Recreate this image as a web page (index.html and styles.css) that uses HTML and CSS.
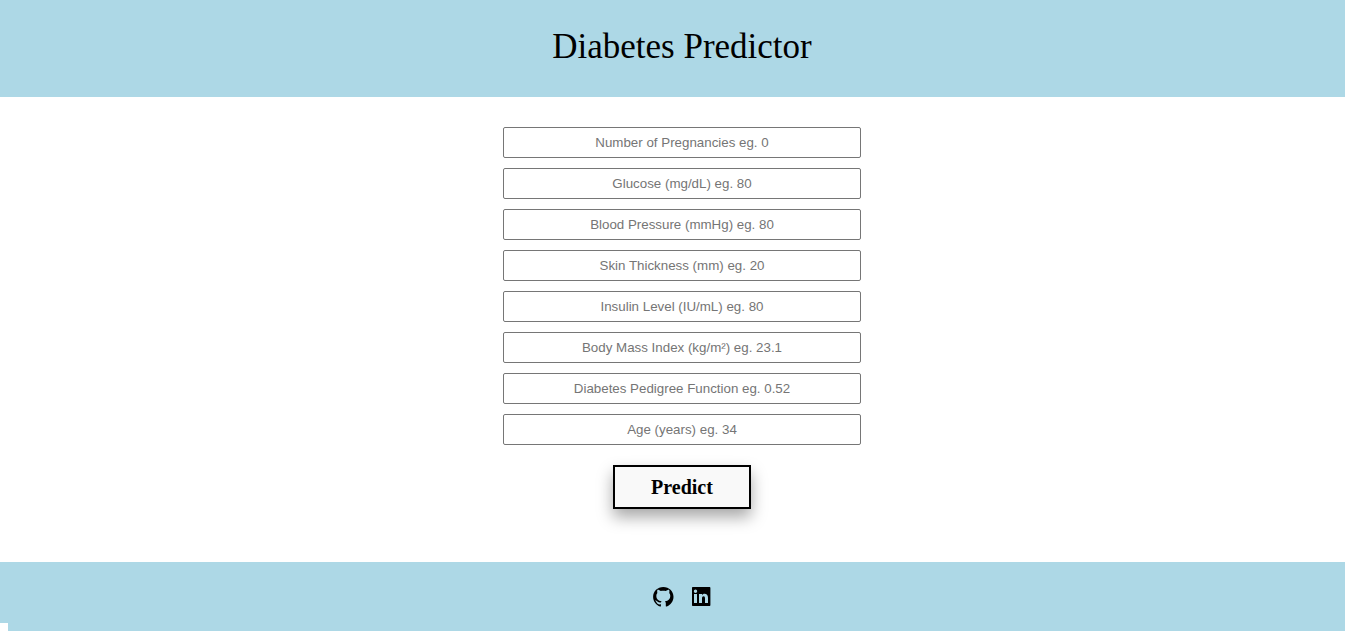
FILE: index.html
```html
<!DOCTYPE html>
<html lang="en">
<head>
<meta charset="utf-8">
<meta name="viewport" content="width=device-width, initial-scale=1">
<title>Diabetes Predictor</title>
<link rel="stylesheet" href="styles.css">
</head>
<body>
<header class="banner">
  <h1 class="title">Diabetes Predictor</h1>
</header>
<main class="content">
  <form class="form">
    <input class="field" type="text" name="pregnancies" aria-label="Number of Pregnancies" placeholder="Number of Pregnancies eg. 0">
    <input class="field" type="text" name="glucose" aria-label="Glucose" placeholder="Glucose (mg/dL) eg. 80">
    <input class="field" type="text" name="bloodpressure" aria-label="Blood Pressure" placeholder="Blood Pressure (mmHg) eg. 80">
    <input class="field" type="text" name="skinthickness" aria-label="Skin Thickness" placeholder="Skin Thickness (mm) eg. 20">
    <input class="field" type="text" name="insulin" aria-label="Insulin Level" placeholder="Insulin Level (IU/mL) eg. 80">
    <input class="field" type="text" name="bmi" aria-label="Body Mass Index" placeholder="Body Mass Index (kg/m²) eg. 23.1">
    <input class="field" type="text" name="dpf" aria-label="Diabetes Pedigree Function" placeholder="Diabetes Pedigree Function eg. 0.52">
    <input class="field" type="text" name="age" aria-label="Age" placeholder="Age (years) eg. 34">
    <button class="predict" type="submit">Predict</button>
  </form>
</main>
<footer class="footer">
  <a class="social" href="#github" aria-label="GitHub">
    <svg class="icon" viewBox="0 0 22 22" width="22" height="22" aria-hidden="true"><path d="M11.300 1C5.500 1 1.100 5.300 1.100 10.800c0 4.500 2.900 8.400 7 9.800.6.100.8-.3.800-.6v-1.700c-2.500.5-3.700-.5-4.300-1.800-.3-.7-.7-1.100-1.200-1.400-.5-.4 0-.7.500-.6 1.900.4 1.900 2.500 5.100 1.900.1-.5.300-.9.600-1.200C6 14.900 4.300 13 4.300 10c0-1.300.4-2.300 1.100-3.100-.3-.8-.3-2 .1-3.100 1.300 0 2.400.7 3.200 1.300 1.700-.4 3.500-.4 5.200 0 .8-.6 1.900-1.300 3.200-1.300.4 1.100.4 2.300.1 3.100.7.800 1.100 1.800 1.100 3.100 0 3-1.700 4.900-5.300 5.200.5.500.8 1.200.8 2.100V20c0 .3.200.7.800.6 4-1.400 6.900-5.300 6.900-9.800C21.500 5.300 17.100 1 11.300 1z"/></svg>
  </a>
  <a class="social" href="#linkedin" aria-label="LinkedIn">
    <svg class="icon" viewBox="0 0 22 22" width="22" height="22" aria-hidden="true"><path fill-rule="evenodd" d="M3 1h16.400c.6 0 1 .4 1 1v17c0 .6-.4 1-1 1H3c-.6 0-1-.4-1-1V2c0-.6.4-1 1-1zM4 8v9h3V8zM5.500 3.500a1.700 1.700 0 1 0 0 3.400 1.700 1.700 0 0 0 0-3.400zM9 8v9h3v-4.600c0-1.400.6-2.100 1.600-2.100s1.400.8 1.400 2.100V17h3v-5.200c0-2.700-1.400-4-3.400-4-1.200 0-2.100.6-2.600 1.400V8z"/></svg>
  </a>
</footer>
</body>
</html>
```
FILE: styles.css
```css
* {
  box-sizing: border-box;
}

body {
  margin: 0;
  background: #fff;
  color: #000;
  font-family: "Liberation Serif", "Times New Roman", serif;
}

.banner,
.content,
.footer {
  padding-left: 19px;
}

.banner {
  padding-top: 27px;
  padding-bottom: 30px;
  background: lightblue;
}

.title {
  margin: 0;
  font-size: 35px;
  font-weight: 400;
  line-height: 40px;
  text-align: center;
}

.form {
  display: flex;
  flex-direction: column;
  align-items: center;
  gap: 10px;
  padding: 30px 0 53px;
}

.field {
  width: 358px;
  max-width: 100%;
  height: 31px;
  padding: 1px 2px;
  border: 1px solid #767676;
  border-radius: 2px;
  background: #fff;
  font-family: "Liberation Sans", Arial, sans-serif;
  text-align: center;
}

.field::placeholder {
  color: #757575;
}

.predict {
  margin-top: 10px;
  padding: 9px 36px;
  border: 2px solid #000;
  background: #f9f9f9;
  box-shadow: 0 8px 16px rgba(0, 0, 0, 0.35);
  color: #000;
  font-family: inherit;
  font-size: 20px;
  font-weight: 700;
  line-height: 22px;
  cursor: pointer;
}

.footer {
  position: relative;
  display: flex;
  justify-content: center;
  gap: 16px;
  padding-top: 24px;
  padding-bottom: 23px;
  background: lightblue;
}

/* White corner at the start of the footer's lower edge */
.footer::after {
  content: "";
  position: absolute;
  bottom: 0;
  left: 0;
  width: 8px;
  height: 8px;
  background: #fff;
}

.social {
  color: #000;
}

.icon {
  display: block;
  fill: currentColor;
}
```
